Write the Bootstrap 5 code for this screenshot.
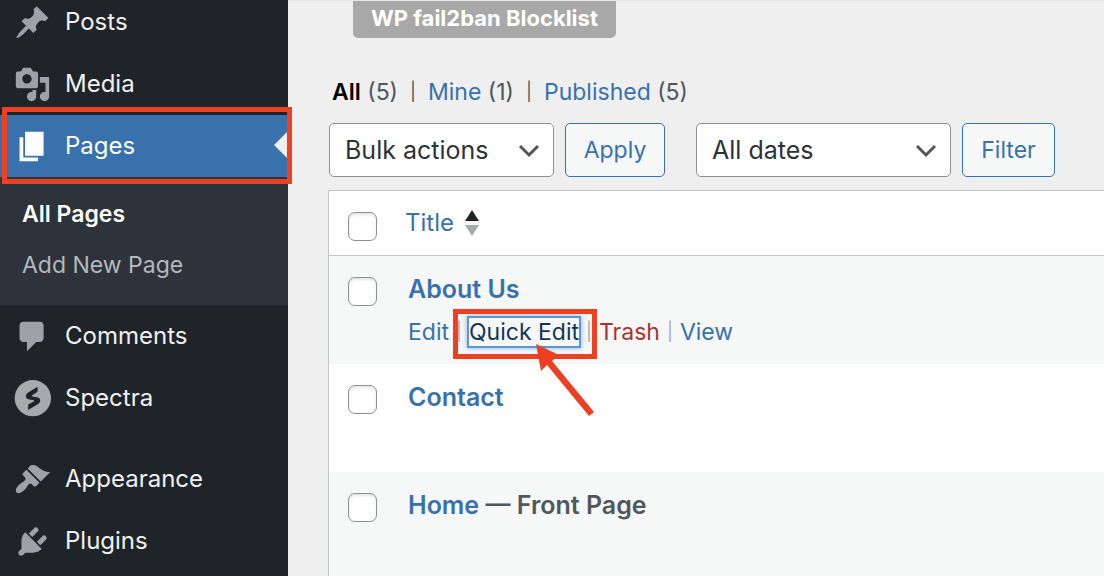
<!DOCTYPE html>
<html lang="en">
<head>
<meta charset="utf-8">
<meta name="viewport" content="width=device-width, initial-scale=1">
<title>Pages</title>
<link href="https://cdn.jsdelivr.net/npm/bootstrap@5.3.0/dist/css/bootstrap.min.css" rel="stylesheet">
<style>
  :root { --wp-blue: #3871ac; --wp-dark: #1f2428; --wp-sub: #2e323a; --wp-line: #c3c4c7; --wp-text: #50575e; --wp-mark: #ed4023; }
  body { font-family: Inter, "Liberation Sans", sans-serif; font-size: 23px; line-height: 32px; background: #efefef; color: var(--wp-text); }
  a { color: var(--wp-blue); text-decoration: none; }
  .admin-shell { height: 100vh; }
  .admin-menu { width: 288px; background: var(--wp-dark); z-index: 2; }
  .menu-items { margin-top: -9px; }
  .menu-link { height: 62px; padding-left: 14px; gap: 14px; color: #f0f0f1; font-size: 24px; }
  .menu-link svg { width: 37px; height: 37px; fill: #9ca2a7; flex: none; }
  .menu-link.current { background: var(--wp-blue); color: #fff; }
  .menu-link.current svg { fill: #fff; }
  .menu-link.current::before { content: ""; position: absolute; right: 0; top: 16px; border: 14px solid transparent; border-left: 0; border-right-color: #efefef; }
  .menu-link.current::after { content: ""; position: absolute; inset: -8px -4px -7px 2px; border: 5px solid var(--wp-mark); }
  .submenu { background: var(--wp-sub); height: 128px; padding: 12px 22px; }
  .submenu a { color: #b4b9be; line-height: 51px; }
  .submenu a.chosen { color: #fff; font-weight: 600; }
  .menu-gap { height: 19px; }
  .content-area { padding-left: 328px; margin-left: -288px; border-top: 1px solid #e6e6e6; }
  .plugin-btn { height: 37px; margin-left: 25px; padding: 0 18px 4px; border: 0; border-radius: 0 0 5px 5px; background: #a8a8a8; color: #fff; font-size: 22px; font-weight: 700; }
  .filters-list { margin: 38px 0 15px 4px; gap: 12px; }
  .filters-list .chosen { color: #000; font-weight: 600; }
  .bar { font-size: 18px; }
  .tools-row { margin-left: 1px; margin-bottom: 13px; gap: 11px; }
  .tools-row .form-select, .tools-row .btn { height: 54px; border-radius: 5px; }
  .tools-row .form-select { border-color: #8c8f94; color: #2c3338; font-size: 25px; line-height: 32px; padding: 0 40px 0 15px; background-size: 24px 24px; background-position: right 12px center;
    background-image: url("data:image/svg+xml,%3Csvg xmlns='http://www.w3.org/2000/svg' viewBox='0 0 24 24'%3E%3Cpath fill='none' stroke='%23555' stroke-width='3' d='M3 8l9 9 9-9'/%3E%3C/svg%3E"); }
  .bulk-select { width: 225px; }
  .dates-select { width: 255px; margin-left: 20px; }
  .tools-row .btn { padding: 0; font-size: 23px; color: var(--wp-blue); border-color: var(--wp-blue); background: #f6f7f7; }
  .apply-btn { width: 100px; }
  .filter-btn { width: 93px; }
  .pages-table { border: 1px solid var(--wp-line); border-right: 0; background: #fff; margin: 0; border-collapse: separate; border-spacing: 0; width: 100%; }
  .pages-table th, .pages-table td { padding: 0; vertical-align: top; }
  .pages-table thead th { height: 65px; border-bottom: 1px solid var(--wp-line); font-size: 24px; font-weight: 400; padding-top: 16px; }
  .pages-table tbody td { height: 108px; padding: 17px 0 0 3px; }
  .pages-table tbody tr:nth-child(odd) { background: #f6f7f7; }
  .pages-table .pick-cell, .pages-table thead .pick-cell { width: 76px; padding: 21px 0 0 19px; line-height: 0; }
  .form-check-input.pick { width: 29px; height: 29px; margin: 0; border: 1px solid #8c8f94; border-radius: 7px; box-shadow: inset 0 2px 3px rgba(0,0,0,.1); }
  .page-title { font-size: 25px; font-weight: 600; }
  .row-actions { margin-top: 10px; gap: 7px; }
  .row-actions .bar { color: #a7aaad; }
  .row-actions .trash { color: #a83434; }
  .quick-edit { line-height: 28px; color: #143654; box-shadow: 0 0 0 2px #5e94d2, 0 0 5px 2px rgba(79,148,212,.7); }
  .mark-box { position: absolute; inset: -9px -18px -13px -16px; border: 5px solid var(--wp-mark); }
  .mark-arrow { position: absolute; left: 67px; top: 26px; width: 60px; height: 74px; z-index: 3; }
</style>
</head>
<body>
<div class="admin-shell d-flex overflow-hidden">
  <nav class="admin-menu flex-shrink-0 position-relative" aria-label="Admin menu">
    <ul class="menu-items list-unstyled mb-0">
      <li><a href="#" class="menu-link d-flex align-items-center">
        <svg viewBox="0 0 20 20" aria-hidden="true"><path d="M10.44 3.02l1.82-1.82 6.36 6.35-1.83 1.82c-1.05-.68-2.48-.57-3.41.36l-.75.75c-.92.93-1.04 2.35-.35 3.41l-1.83 1.82-2.41-2.41-2.8 2.79c-.42.42-3.38 2.71-3.8 2.29s1.86-3.39 2.28-3.81l2.79-2.79L4.1 9.36l1.83-1.82c1.05.69 2.48.57 3.4-.36l.75-.75c.93-.92 1.05-2.35.36-3.41z"/></svg>Posts</a></li>
      <li><a href="#" class="menu-link d-flex align-items-center">
        <svg viewBox="0 0 20 20" aria-hidden="true"><path d="M13 11V4c0-.55-.45-1-1-1h-1.67L9 1H5L3.67 3H2c-.55 0-1 .45-1 1v7c0 .55.45 1 1 1h10c.55 0 1-.45 1-1zM7 4.5c1.38 0 2.5 1.12 2.5 2.5S8.38 9.5 7 9.5 4.5 8.38 4.5 7 5.62 4.5 7 4.5zM14 6h5v10.5c0 1.38-1.12 2.5-2.5 2.5S14 17.88 14 16.5s1.12-2.5 2.5-2.5c.17 0 .34.02.5.05V9h-3V6zm-4 8.05V13h2v3.5c0 1.38-1.12 2.5-2.5 2.5S7 17.88 7 16.5 8.12 14 9.5 14c.17 0 .34.02.5.05z"/></svg>Media</a></li>
      <li><a href="#" class="menu-link current position-relative d-flex align-items-center" aria-current="true">
        <svg viewBox="0 0 20 20" aria-hidden="true"><path d="M6 15V2h10v13H6zm-1 1h8v2H3V5h2v11z"/></svg>Pages</a>
        <ul class="submenu list-unstyled">
          <li><a href="#" class="chosen d-block">All Pages</a></li>
          <li><a href="#" class="d-block">Add New Page</a></li>
        </ul></li>
      <li><a href="#" class="menu-link d-flex align-items-center">
        <svg viewBox="0 0 20 20" aria-hidden="true"><path d="M5 2h9c1.1 0 2 .9 2 2v7c0 1.1-.9 2-2 2h-2l-5 5v-5H5c-1.1 0-2-.9-2-2V4c0-1.1.9-2 2-2z"/></svg>Comments</a></li>
      <li><a href="#" class="menu-link d-flex align-items-center">
        <svg viewBox="-2 0 110 110" aria-hidden="true"><circle cx="54" cy="54" r="54" fill="#a7aaad"/><path fill="#1f2428" d="M68 20v15L52 45q-3 3 1 4l16 3q7 2 7 9 0 6-6 10L40 89V73l17-9q3-3-1-4l-15-3q-8-2-8-9 0-6 7-11z"/></svg>Spectra</a></li>
      <li class="menu-gap"></li>
      <li><a href="#" class="menu-link d-flex align-items-center">
        <svg viewBox="0 0 20 20" aria-hidden="true"><path d="M14.48 11.06L7.41 3.99l1.5-1.5c.5-.56 2.3-.47 3.51.32 1.21.8 1.43 1.28 2.91 2.1 1.18.64 2.45 1.26 4.45.85zm-.71.71L6.7 4.7 4.93 6.47c-.39.39-.39 1.02 0 1.41l1.06 1.06c.39.39.39 1.03 0 1.42-.6.6-1.43 1.11-2.21 1.69-.35.26-.7.53-1.01.84C1.43 14.23.4 16.08 1.4 17.07c.99 1 2.84-.03 4.18-1.36.31-.31.58-.66.85-1.02.57-.78 1.08-1.61 1.69-2.21.39-.39 1.02-.39 1.41 0l1.06 1.06c.39.39 1.02.39 1.41 0z"/></svg>Appearance</a></li>
      <li><a href="#" class="menu-link d-flex align-items-center">
        <svg viewBox="0 0 20 20" aria-hidden="true"><path d="M13.11 4.36L9.87 7.6 8 5.73l3.24-3.24c.35-.34 1.05-.2 1.56.32.52.51.66 1.21.31 1.55zm-8 1.77l.91-1.12 9.01 9.01-1.19.84c-.71.71-2.63 1.16-3.82 1.16H6.14L4.9 17.26c-.59.59-1.54.59-2.12 0-.59-.58-.59-1.53 0-2.12l1.24-1.24v-3.88c0-1.13.4-3.19 1.09-3.89zm7.26 3.97l3.24-3.24c.34-.35 1.04-.21 1.55.31.52.51.66 1.21.31 1.55l-3.24 3.25z"/></svg>Plugins</a></li>
    </ul>
  </nav>
  <main class="content-area flex-grow-1">
    <button type="button" class="plugin-btn d-block">WP fail2ban Blocklist</button>
    <div class="filters-list d-flex">
      <span><a href="#" class="chosen">All</a> (5)</span><span class="bar">|</span>
      <span><a href="#">Mine</a> (1)</span><span class="bar">|</span>
      <span><a href="#">Published</a> (5)</span>
    </div>
    <form class="tools-row d-flex">
      <select class="form-select bulk-select flex-shrink-0" aria-label="Bulk actions"><option>Bulk actions</option></select>
      <button type="button" class="btn apply-btn">Apply</button>
      <select class="form-select dates-select flex-shrink-0" aria-label="Filter by date"><option>All dates</option></select>
      <button type="button" class="btn filter-btn">Filter</button>
    </form>
    <table class="pages-table">
      <thead><tr>
        <th class="pick-cell"><input type="checkbox" class="form-check-input pick" aria-label="Select all"></th>
        <th><a href="#" class="d-inline-flex align-items-center gap-2">Title
          <svg width="20" height="28" viewBox="0 0 20 28" aria-hidden="true"><path fill="#1d2327" d="M3 12l7-11 7 11z"/><path fill="#a7aaad" d="M3 16h14l-7 11z"/></svg></a></th>
      </tr></thead>
      <tbody>
        <tr>
          <td class="pick-cell"><input type="checkbox" class="form-check-input pick" aria-label="Select About Us"></td>
          <td><a href="#" class="page-title">About Us</a>
            <div class="row-actions d-flex align-items-center">
              <a href="#">Edit</a><span class="bar">|</span>
              <span class="position-relative"><a href="#" class="quick-edit d-block">Quick Edit</a><span class="mark-box"></span>
                <svg class="mark-arrow" viewBox="0 0 60 74" aria-hidden="true"><path fill="#ed4023" d="M0 0l23 11-7 6 42 51-5 4-42-51-6 6z"/></svg></span>
              <span class="bar">|</span><a href="#" class="trash">Trash</a><span class="bar">|</span><a href="#">View</a>
            </div></td>
        </tr>
        <tr>
          <td class="pick-cell"><input type="checkbox" class="form-check-input pick" aria-label="Select Contact"></td>
          <td><a href="#" class="page-title">Contact</a></td>
        </tr>
        <tr>
          <td class="pick-cell"><input type="checkbox" class="form-check-input pick" aria-label="Select Home"></td>
          <td><span class="page-title"><a href="#">Home</a> — Front Page</span></td>
        </tr>
      </tbody>
    </table>
  </main>
</div>
<script src="https://cdn.jsdelivr.net/npm/bootstrap@5.3.0/dist/js/bootstrap.bundle.min.js"></script>
</body>
</html>
